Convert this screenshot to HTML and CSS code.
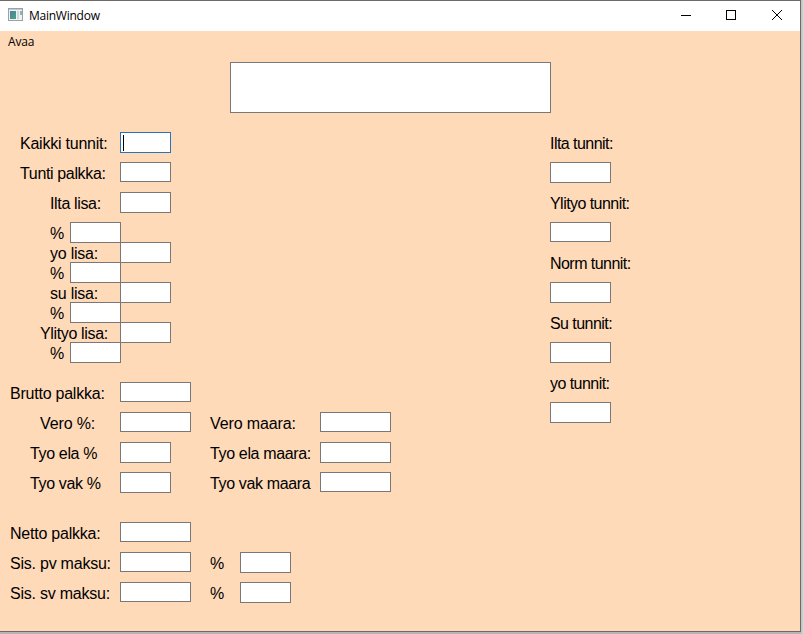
FILE: index.html
```html
<!DOCTYPE html>
<html lang="fi">
<head>
<meta charset="utf-8">
<title>MainWindow</title>
<link rel="stylesheet" href="styles.css">
</head>
<body>
<div class="window">
  <header class="titlebar">
    <svg class="app-icon" width="15" height="13" viewBox="0 0 15 13" shape-rendering="crispEdges">
      <defs><linearGradient id="pane" x1="0" y1="0" x2="1" y2="1"><stop offset="0" stop-color="#4b83a2"/><stop offset="1" stop-color="#50a080"/></linearGradient></defs>
      <rect x=".5" y=".5" width="14" height="12" fill="#f1f3f3" stroke="#98a1aa"/>
      <path d="M1 1.5h13" stroke="#c3cbd2"/>
      <rect x="2" y="3" width="6" height="8" fill="url(#pane)"/>
      <rect x="9" y="3" width="2" height="8" fill="#cbdada"/>
      <rect x="12" y="3" width="2" height="4" fill="#8fb3a8"/>
    </svg>
    <span class="title">MainWindow</span>
    <div class="controls">
      <svg width="46" height="30" viewBox="0 0 46 30" shape-rendering="crispEdges"><path d="M18 14.5h10" stroke="#000"/></svg>
      <svg width="46" height="30" viewBox="0 0 46 30" shape-rendering="crispEdges"><path d="M17.5 9.5h9v9h-9z" fill="none" stroke="#000"/></svg>
      <svg width="46" height="30" viewBox="0 0 46 30"><path d="M17 9l10 10M27 9l-10 10" stroke="#000"/></svg>
    </div>
  </header>
  <nav class="menu">Avaa</nav>
  <div class="display field"></div>
  <main class="content">
    <section class="form">
      <div class="row"><label class="in20 snug">Kaikki tunnit:</label><i class="field tall focus"></i></div>
      <div class="row"><label class="in20 close">Tunti palkka:</label><i class="field"></i></div>
      <div class="row"><label class="in50 close">Ilta lisa:</label><i class="field tall"></i></div>
      <div class="row tight percent"><label class="in50">%</label><i class="field tall"></i></div>
      <div class="row tight"><label class="in50 snug">yo lisa:</label><i class="field tall"></i></div>
      <div class="row tight percent"><label class="in50">%</label><i class="field tall"></i></div>
      <div class="row tight"><label class="in50 snug">su lisa:</label><i class="field tall"></i></div>
      <div class="row tight percent"><label class="in50">%</label><i class="field tall"></i></div>
      <div class="row tight"><label class="in40 close">Ylityo lisa:</label><i class="field tall"></i></div>
      <div class="row percent last"><label class="in50">%</label><i class="field tall"></i></div>
      <div class="row"><label class="in10 snug">Brutto palkka:</label><i class="field wide"></i></div>
      <div class="row"><label class="in40">Vero %:</label><i class="field wide"></i><label>Vero maara:</label><i class="field wide"></i></div>
      <div class="row"><label class="in30 close">Tyo ela %</label><i class="field tall"></i><label class="close">Tyo ela maara:</label><i class="field wide tall"></i></div>
      <div class="row last-tax"><label class="in30 close">Tyo vak %</label><i class="field tall"></i><label class="close">Tyo vak maara</label><i class="field wide"></i></div>
      <div class="row"><label class="in10 snug">Netto palkka:</label><i class="field wide"></i></div>
      <div class="row fee"><label class="in10 snug">Sis. pv maksu:</label><i class="field wide"></i><label>%</label><i class="field tall"></i></div>
      <div class="row fee"><label class="in10 snug">Sis. sv maksu:</label><i class="field wide"></i><label>%</label><i class="field tall"></i></div>
    </section>
    <aside class="hours">
      <label>Ilta tunnit:</label><i class="field tall"></i>
      <label>Ylityo tunnit:</label><i class="field"></i>
      <label>Norm tunnit:</label><i class="field tall"></i>
      <label>Su tunnit:</label><i class="field tall"></i>
      <label>yo tunnit:</label><i class="field tall"></i>
    </aside>
  </main>
</div>
</body>
</html>
```
FILE: styles.css
```css
* { box-sizing: border-box; }
body {
  margin: 0;
  width: 804px;
  height: 634px;
  overflow: hidden;
  background: linear-gradient(90deg, #b5b5b5 800px, #dcdcdc 804px);
}
.window {
  width: 801px;
  height: 632px;
  background: #ffdab9;
  border: solid #6f6a68;
  border-width: 1px 1px 1px 0;
}
.titlebar {
  display: flex;
  height: 30px;
  padding-left: 8px;
  background: #fff;
}
.app-icon { margin-top: 7px; }
.title {
  margin-left: 6px;
  font: 12px/30px "Open Sans", sans-serif;
  letter-spacing: -0.25px;
  color: #000;
}
.controls { display: flex; margin-left: auto; margin-right: -1px; }
.menu {
  height: 31px;
  padding-left: 8px;
  font: 12px/21px "Open Sans", sans-serif;
  letter-spacing: -0.2px;
  color: #000;
}
.field {
  display: block;
  width: 51px;
  height: 20px;
  background: #fff;
  border: 1px solid #7a7774;
}
.tall { height: 21px; }
.wide { width: 71px; }
.display { width: 321px; height: 51px; margin-left: 230px; }
.focus { border-color: #2a74b5; padding: 2px 0 0 2px; }
.focus::before {
  content: "";
  display: block;
  width: 1px;
  height: 16px;
  background: #000;
}
.content {
  display: flex;
  margin-top: 19px;
  font: 16px/20px "Liberation Sans", Arial, sans-serif;
  color: #000;
}
.form { width: 550px; }
.row {
  display: grid;
  grid-template-columns: 120px 90px 110px 71px;
  height: 30px;
  align-items: start;
}
.tight { height: 20px; }
.percent { grid-template-columns: 70px 51px; }
.fee { grid-template-columns: 120px 90px 30px 51px; }
.last { height: 40px; }
.last-tax { height: 50px; }
label { padding-top: 2px; white-space: nowrap; letter-spacing: -0.12px; }
.snug { letter-spacing: -0.23px; }
.close { letter-spacing: -0.35px; }
.in10 { padding-left: 10px; }
.in20 { padding-left: 20px; }
.in30 { padding-left: 30px; }
.in40 { padding-left: 40px; }
.in50 { padding-left: 50px; }
.hours {
  display: grid;
  grid-auto-rows: 30px;
  align-content: start;
}
.hours .field { width: 61px; }
.hours label { letter-spacing: -0.55px; }
```
